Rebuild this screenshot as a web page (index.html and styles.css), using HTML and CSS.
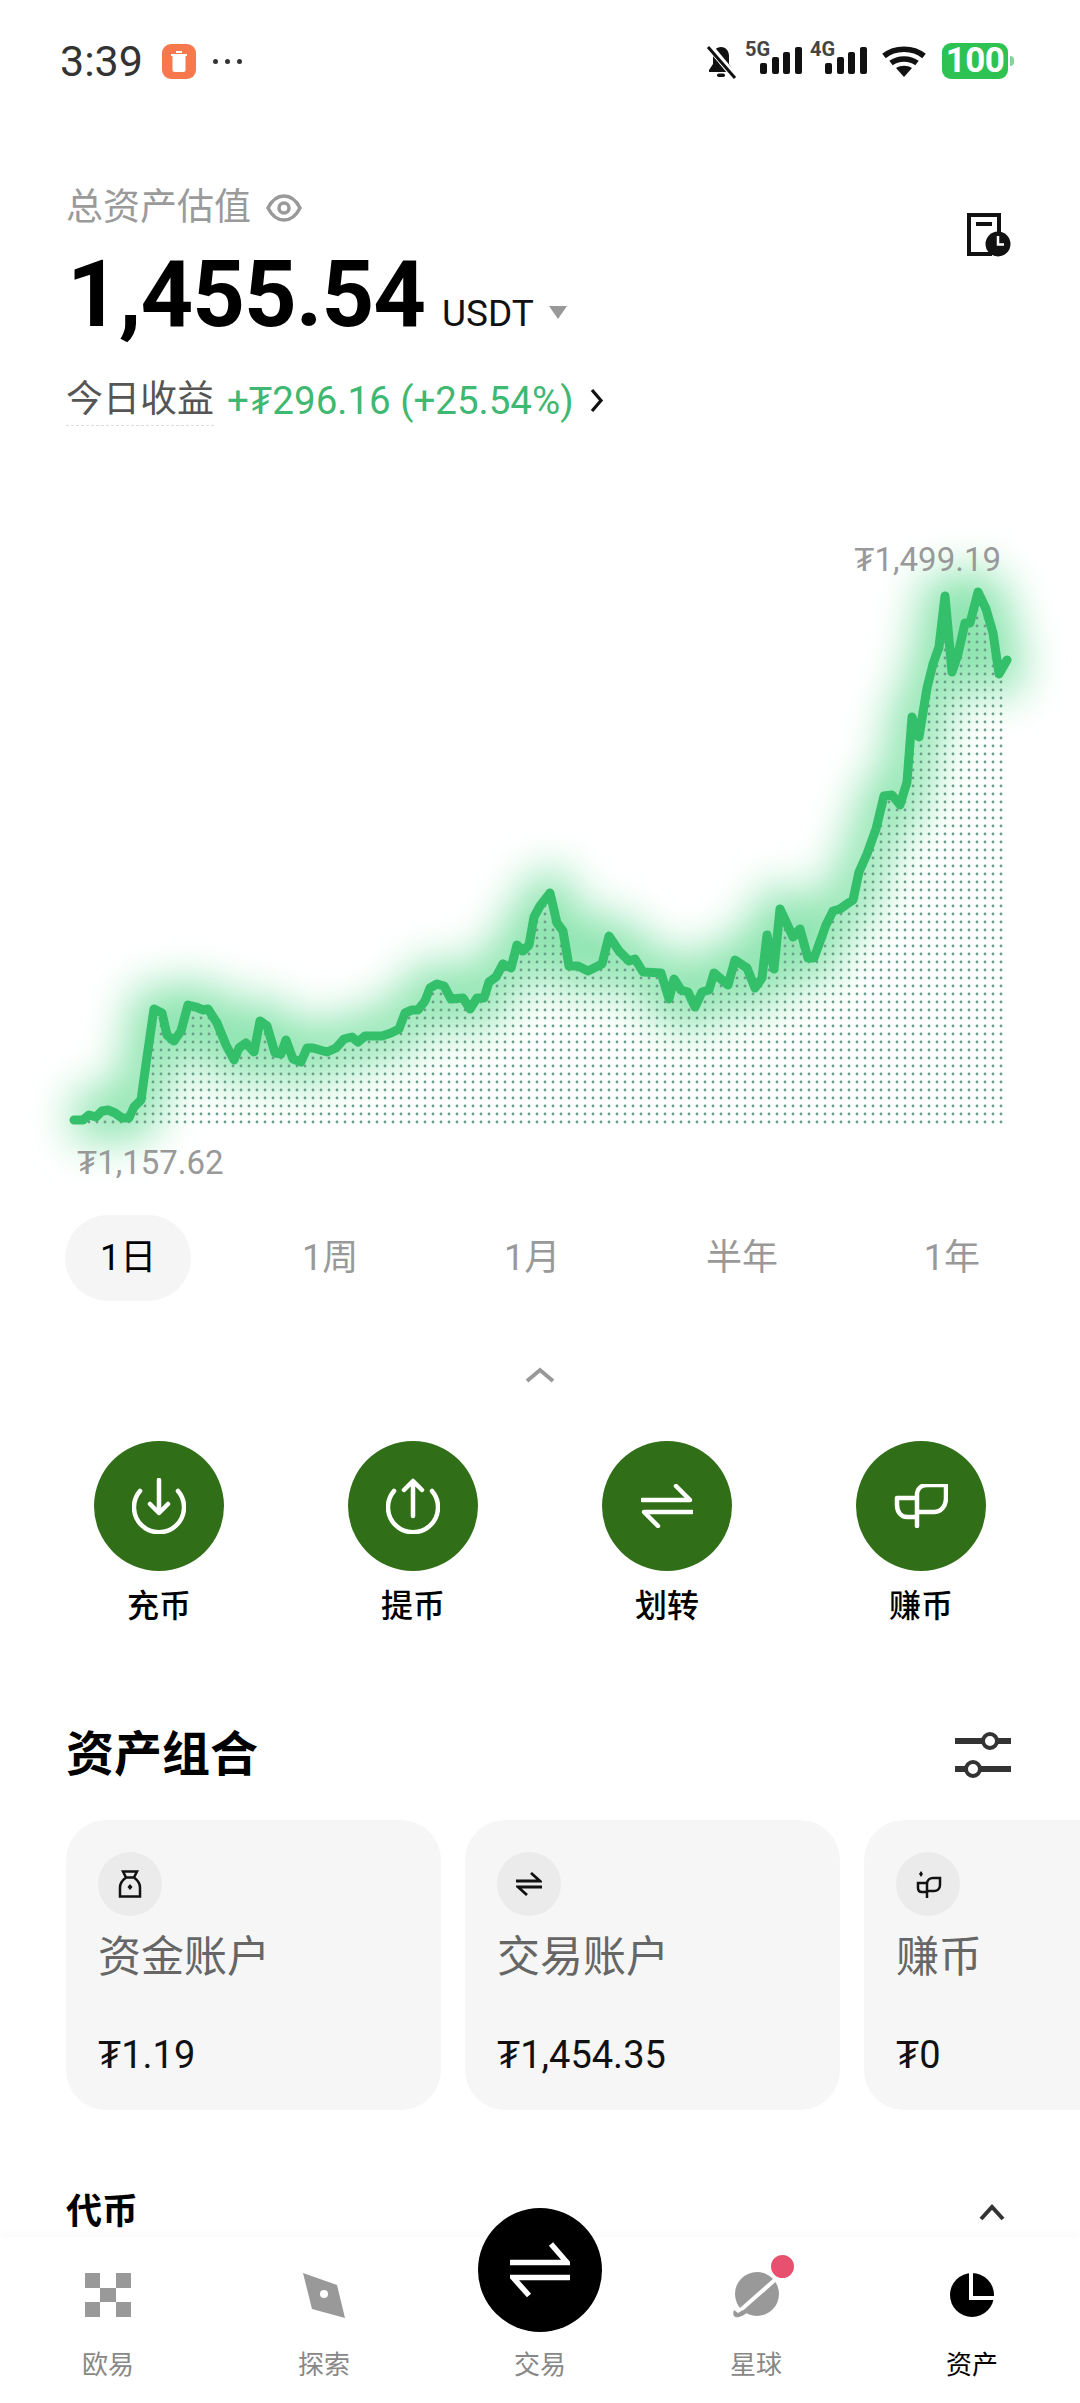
FILE: index.html
```html
<!DOCTYPE html>
<html lang="zh-CN">
<head>
<meta charset="UTF-8" />
<meta name="viewport" content="width=device-width, initial-scale=1" />
<title>资产</title>
<link rel="stylesheet" href="styles.css">
</head>
<body>
  <div class="page">
    <main class="content">
      <div class="status">
        <div class="status-left">
          <span class="time">3:39</span>
          <span class="app-badge">
            <svg width="18" height="22" viewBox="0 0 18 22"><path d="M6 1h6v2H6zM1 4h16v2H1zM2.500 6h13v14a2 2 0 0 1-2 2h-9a2 2 0 0 1-2-2z" fill="#fff"/></svg>
          </span>
          <span class="more-dots"><i></i><i></i><i></i></span>
        </div>
        <div class="status-right">
          <svg class="bell" width="31" height="35" viewBox="0 0 31 35"><path d="M15 3c-5 0-8 4-8 9v8l-4 6v2h24v-2l-4-6v-8c0-5-3-9-8-9z" fill="#111"/><rect x="11" y="29.500" width="8" height="3.500" rx="1.700" fill="#111"/><path d="M3 2l26 31" stroke="#fff" stroke-width="7"/><path d="M2 3l27 31" stroke="#111" stroke-width="3"/></svg>
          <div class="signal"><span class="net">5G</span><i class="b1"></i><i class="b2"></i><i class="b3"></i><i class="b4"></i></div>
          <div class="signal"><span class="net">4G</span><i class="b1"></i><i class="b2"></i><i class="b3"></i><i class="b4"></i></div>
          <svg class="wifi" width="46" height="31" viewBox="0 0 46 31"><path d="M3 10c11-9 29-9 40 0M10 17c7-5.500 19-5.500 26 0" fill="none" stroke="#111" stroke-width="5.500"/><path d="M15 22c5-3 11-3 16 0l-8 9z" fill="#111"/></svg>
          <div class="battery"><span class="battery-level">100</span></div>
          <span class="battery-tip"></span>
        </div>
      </div>

      <section class="summary">
        <div class="summary-main">
          <div class="total-label">总资产估值
            <svg width="36" height="28" viewBox="0 0 36 28"><path d="M2 14C6 6 12 2 18 2s12 4 16 12c-4 8-10 12-16 12S6 22 2 14z" fill="none" stroke="#999" stroke-width="3.500"/><circle cx="18" cy="14" r="5" fill="none" stroke="#999" stroke-width="3.500"/></svg>
          </div>
          <div class="total-row">
            <span class="total-value">1,455.54</span>
            <span class="total-unit">USDT</span>
            <span class="caret-down"></span>
          </div>
          <div class="pnl-row">
            <span class="pnl-label">今日收益</span>
            <span class="pnl-value">+₮296.16 (+25.54%)</span>
            <svg width="15" height="25" viewBox="0 0 15 25"><path d="M3 2l9 10.500L3 23" fill="none" stroke="#111" stroke-width="3.200"/></svg>
          </div>
        </div>
        <svg class="history-icon" width="44" height="44" viewBox="0 0 44 44"><path d="M25 41H2V2h30v20" fill="none" stroke="#111" stroke-width="4"/><rect x="9" y="9" width="16" height="4" fill="#111"/><circle cx="31" cy="31" r="12.500" fill="#111"/><path d="M31 23v8.500h6" fill="none" stroke="#fff" stroke-width="2.500"/></svg>
      </section>

      <div class="chart">
        <span class="chart-high">₮1,499.19</span>
        <span class="chart-low">₮1,157.62</span>
        <svg width="1080" height="670" viewBox="0 520 1080 670">
          <defs>
            <pattern id="dots" patternUnits="userSpaceOnUse" x="997" y="1117" width="8" height="8">
              <circle cx="4" cy="4" r="1.400" fill="#6a9f88"/>
            </pattern>
            <filter id="glow" x="-20%" y="-30%" width="140%" height="160%">
              <feGaussianBlur stdDeviation="22"/>
            </filter>
            <clipPath id="under-line">
              <polygon points="74,1119 83,1119 89,1114 96,1116 102,1110 108,1109 115,1112 122,1117 129,1117 134,1106 141,1099 146,1063 154,1008 162,1012 167,1034 174,1040 181,1030 188,1004 196,1006 203,1009 208,1008 217,1022 226,1044 234,1059 239,1047 246,1042 254,1051 260,1020 267,1025 275,1052 281,1053 286,1039 293,1058 301,1061 307,1047 313,1047 327,1051 336,1047 344,1038 352,1036 358,1041 365,1035 382,1035 391,1032 399,1028 405,1012 412,1009 418,1009 425,1000 430,987 437,983 444,985 451,998 463,997 470,1008 477,997 484,997 489,981 496,976 503,963 511,967 517,944 523,950 529,944 534,916 540,905 550,892 557,922 563,930 569,965 578,965 588,970 602,963 609,935 619,950 629,960 635,958 643,971 661,972 669,998 674,978 681,989 688,991 695,1006 702,991 709,989 714,972 728,984 735,959 747,967 755,987 762,977 767,934 774,968 780,908 793,936 800,928 808,957 814,957 826,924 833,910 840,908 847,903 853,899 859,871 867,853 876,828 884,795 892,794 900,804 907,781 912,716 919,736 927,687 933,663 939,646 945,595 952,671 958,653 965,622 970,622 978,591 986,608 993,632 999,673 1007,659 1007,1130 74,1130"/>
            </clipPath>
            <polyline id="price-line" points="74,1119 83,1119 89,1114 96,1116 102,1110 108,1109 115,1112 122,1117 129,1117 134,1106 141,1099 146,1063 154,1008 162,1012 167,1034 174,1040 181,1030 188,1004 196,1006 203,1009 208,1008 217,1022 226,1044 234,1059 239,1047 246,1042 254,1051 260,1020 267,1025 275,1052 281,1053 286,1039 293,1058 301,1061 307,1047 313,1047 327,1051 336,1047 344,1038 352,1036 358,1041 365,1035 382,1035 391,1032 399,1028 405,1012 412,1009 418,1009 425,1000 430,987 437,983 444,985 451,998 463,997 470,1008 477,997 484,997 489,981 496,976 503,963 511,967 517,944 523,950 529,944 534,916 540,905 550,892 557,922 563,930 569,965 578,965 588,970 602,963 609,935 619,950 629,960 635,958 643,971 661,972 669,998 674,978 681,989 688,991 695,1006 702,991 709,989 714,972 728,984 735,959 747,967 755,987 762,977 767,934 774,968 780,908 793,936 800,928 808,957 814,957 826,924 833,910 840,908 847,903 853,899 859,871 867,853 876,828 884,795 892,794 900,804 907,781 912,716 919,736 927,687 933,663 939,646 945,595 952,671 958,653 965,622 970,622 978,591 986,608 993,632 999,673 1007,659"/>
          </defs>
          <use href="#price-line" class="line-glow" filter="url(#glow)"/>
          <rect x="74" y="560" width="931" height="566" fill="url(#dots)" clip-path="url(#under-line)"/>
          <use href="#price-line" class="line-main"/>
        </svg>
      </div>

      <div class="ranges">
        <span class="range active">1日</span>
        <span class="range">1周</span>
        <span class="range">1月</span>
        <span class="range">半年</span>
        <span class="range">1年</span>
      </div>

      <div class="collapse">
        <svg width="30" height="16" viewBox="0 0 30 16"><path d="M2 14L15 3l13 11" fill="none" stroke="#999" stroke-width="4"/></svg>
      </div>

      <div class="actions">
        <div class="action">
          <span class="action-circle">
            <svg class="action-icon" width="54" height="56" viewBox="0 0 54 56"><path d="M8 13A25 25 0 1 0 46 13"/><path d="M27 2V34M18 26L27 35L36 26"/></svg>
          </span>
          充币
        </div>
        <div class="action">
          <span class="action-circle">
            <svg class="action-icon" width="54" height="56" viewBox="0 0 54 56"><path d="M8 13A25 25 0 1 0 46 13"/><path d="M27 38V4M18 12L27 3L36 12"/></svg>
          </span>
          提币
        </div>
        <div class="action">
          <span class="action-circle">
            <svg class="action-icon" width="52" height="44" viewBox="0 0 52 44"><path d="M1 16h48L35 2M51 28H3l14 14"/></svg>
          </span>
          划转
        </div>
        <div class="action">
          <span class="action-circle">
            <svg class="action-icon" width="54" height="44" viewBox="0 0 54 44"><path d="M23 42V11C23 5 27 1 33 1h19v13c0 8-5 14-12 14H23M23 14H3v7c0 7 4 12 10 12h10"/></svg>
          </span>
          赚币
        </div>
      </div>

      <div class="section-head">
        <h2>资产组合</h2>
        <svg width="56" height="47" viewBox="0 0 56 47"><path d="M0 9h56M0 37h56" stroke="#333" stroke-width="6"/><circle cx="35" cy="9" r="7" fill="#fff" stroke="#333" stroke-width="4"/><circle cx="18" cy="37" r="7" fill="#fff" stroke="#333" stroke-width="4"/></svg>
      </div>

      <div class="cards">
        <div class="card">
          <span class="card-icon">
            <svg width="24" height="28" viewBox="0 0 24 28"><path d="M5 1.500h14l-3 6c4 3 6 6 6 10v9H2v-9c0-4 2-7 6-10zM8 7.500h8" fill="none" stroke="#111" stroke-width="2.500"/><path d="M12 14l2.500 3-2.500 3-2.500-3z" fill="#111"/></svg>
          </span>
          <div class="card-title">资金账户</div>
          <div class="card-value">₮1.19</div>
        </div>
        <div class="card">
          <span class="card-icon">
            <svg width="26" height="24" viewBox="0 0 26 24"><path d="M0 9h24L15 1M26 15H2l9 8" fill="none" stroke="#111" stroke-width="2.800"/></svg>
          </span>
          <div class="card-title">交易账户</div>
          <div class="card-value">₮1,454.35</div>
        </div>
        <div class="card">
          <span class="card-icon">
            <svg width="28" height="28" viewBox="0 0 28 28"><path d="M13 28V14c0-4 3-6 6-6h7v7c0 4-3 6-6 6h-7M13 13H4v5c0 3 2 4 4 4h5" fill="none" stroke="#111" stroke-width="2.500"/><path d="M7 1l2 3-2 3-2-3z" fill="#111"/></svg>
          </span>
          <div class="card-title">赚币</div>
          <div class="card-value">₮0</div>
        </div>
      </div>

      <div class="token-head">
        <h3>代币</h3>
        <svg width="26" height="17" viewBox="0 0 26 17"><path d="M2 15L13 3l11 12" fill="none" stroke="#333" stroke-width="4"/></svg>
      </div>
    </main>

    <nav class="tabbar">
      <a class="tab">
        <svg width="46" height="46" viewBox="0 0 46 46"><path d="M0 1h15v15H0zM31 1h15v15H31zM15 16h16v14H15zM0 30h15v15H0zM31 30h15v15H31z" fill="#999"/></svg>
        欧易
      </a>
      <a class="tab">
        <svg width="46" height="46" viewBox="0 0 46 46"><path d="M2 1l34 12 8 33-33-9z" fill="#999"/><circle cx="23" cy="22" r="4" fill="#fff"/></svg>
        探索
      </a>
      <a class="tab trade">
        <span class="trade-circle">
          <svg width="60" height="56" viewBox="0 0 60 56"><path d="M0 20.500h57L41 2M60 35.500H3l16 18" fill="none" stroke="#fff" stroke-width="5.500"/></svg>
        </span>
        交易
      </a>
      <a class="tab">
        <span class="planet">
          <svg width="46" height="46" viewBox="0 0 46 46"><circle cx="24" cy="22" r="22" fill="#999"/><path d="M2 43L44 6" stroke="#fff" stroke-width="4"/><path d="M1 38c-2 5 0 8 5 7 3-1 5-2 8-4l-4-3-5 3z" fill="#999"/></svg>
          <span class="red-dot"></span>
        </span>
        星球
      </a>
      <a class="tab current">
        <svg width="46" height="46" viewBox="0 0 46 46"><circle cx="23" cy="23" r="22" fill="#000"/><path d="M22 0v26h24" fill="none" stroke="#fff" stroke-width="4"/></svg>
        资产
      </a>
    </nav>
  </div>
</body>
</html>
```

FILE: styles.css
```css
* {
  box-sizing: border-box;
}
body {
  margin: 0;
  font-family: Roboto, 'Noto Sans CJK SC', sans-serif;
  background: #fff;
  color: #000;
}
.page {
  width: 1080px;
  height: 2403px;
  overflow: hidden;
  display: flex;
  flex-direction: column;
  position: relative;
}
.content {
  flex: 1;
  overflow: hidden;
}

/* status bar */
.status {
  height: 122px;
  padding: 0 66px 0 60px;
  display: flex;
  justify-content: space-between;
  align-items: center;
}
.status-left {
  display: flex;
  align-items: center;
}
.time {
  font-size: 43px;
  color: #333;
  width: 102px;
}
.app-badge {
  width: 34px;
  height: 35px;
  background: #f8784e;
  border-radius: 9px;
  display: flex;
  align-items: center;
  justify-content: center;
}
.more-dots {
  display: flex;
  gap: 7px;
  margin-left: 17px;
}
.more-dots i {
  width: 5px;
  height: 5px;
  border-radius: 50%;
  background: #333;
}
.status-right {
  display: flex;
  align-items: center;
}
.bell {
  margin-right: 8px;
}
.signal {
  position: relative;
  width: 57px;
  height: 32px;
  margin-bottom: 6px;
  display: flex;
  align-items: flex-end;
  justify-content: flex-end;
  gap: 4.670px;
}
.signal + .signal {
  margin-left: 8px;
}
.net {
  position: absolute;
  left: 0;
  top: -3px;
  font-size: 20px;
  font-weight: 700;
  line-height: 20px;
  color: #444;
}
.signal i {
  width: 7px;
  background: #111;
  border-radius: 2px;
}
.signal .b1 { height: 11px; }
.signal .b2 { height: 17px; }
.signal .b3 { height: 22px; }
.signal .b4 { height: 27px; }
.wifi {
  margin-left: 14px;
  margin-right: 15px;
}
.battery {
  width: 66px;
  height: 36px;
  background: #2ec252;
  border-radius: 9px;
  display: flex;
  align-items: center;
  justify-content: center;
}
.battery-level {
  color: #fff;
  font-size: 35px;
  font-weight: 700;
  line-height: 36px;
  letter-spacing: -0.5px;
}
.battery-tip {
  width: 4px;
  height: 10px;
  margin-left: 2px;
  background: #7ed69a;
  border-radius: 0 4px 4px 0;
}

/* total */
.summary {
  padding: 61px 69px 0 66px;
  display: flex;
  justify-content: space-between;
  align-items: flex-start;
}
.total-label {
  font-size: 37px;
  line-height: 50px;
  color: #9a9a9a;
  display: flex;
  align-items: center;
  gap: 15px;
}
.total-row {
  display: flex;
  align-items: baseline;
  height: 100px;
  margin-top: 12px;
  line-height: 100px;
}
.total-value {
  font-size: 92px;
  font-weight: 700;
  letter-spacing: -1px;
  margin-left: 1px;
}
.total-unit {
  font-size: 37px;
  margin-left: 17px;
  color: #111;
}
.caret-down {
  width: 0;
  height: 0;
  margin-left: 15px;
  border-left: 9px solid transparent;
  border-right: 9px solid transparent;
  border-top: 13px solid #999;
  transform: translateY(-7px);
}
.pnl-row {
  display: flex;
  align-items: center;
  height: 50px;
  margin-top: 30px;
}
.pnl-label {
  font-size: 37px;
  color: #555;
  line-height: 50px;
  border-bottom: 1px dashed #ddd;
}
.pnl-value {
  font-size: 38.500px;
  color: #3fb871;
  margin: 0 15px 0 13px;
}
.history-icon {
  margin-top: 30px;
}

/* chart */
.chart {
  position: relative;
  margin-top: 96px;
  height: 670px;
}
.chart svg {
  display: block;
}
.chart-high,
.chart-low {
  position: absolute;
  font-size: 33px;
  line-height: 40px;
  color: #999;
  z-index: 1;
}
.chart-high {
  right: 79px;
  top: 19px;
}
.chart-low {
  left: 77px;
  top: 622px;
}
.line-glow {
  fill: none;
  stroke: #8be4ae;
  stroke-width: 46;
  stroke-linejoin: round;
}
.line-main {
  fill: none;
  stroke: #34bf6b;
  stroke-width: 9;
  stroke-linejoin: round;
  stroke-linecap: round;
}

/* range tabs */
.ranges {
  margin: 24px 65px 0;
  display: flex;
  justify-content: space-between;
}
.range {
  height: 86px;
  line-height: 86px;
  padding: 0 35px;
  border-radius: 43px;
  font-size: 36px;
  color: #999;
}
.range.active {
  background: #f5f5f5;
  color: #000;
}
.collapse {
  margin-top: 66px;
  height: 20px;
  display: flex;
  justify-content: center;
}

/* actions */
.actions {
  margin-top: 54px;
  padding: 0 32px;
  display: grid;
  grid-template-columns: repeat(4, 1fr);
}
.action {
  display: flex;
  flex-direction: column;
  align-items: center;
  gap: 12px;
  font-size: 32px;
  line-height: 46px;
  font-weight: 500;
}
.action-circle {
  width: 130px;
  height: 130px;
  border-radius: 50%;
  background: #306f18;
  display: flex;
  align-items: center;
  justify-content: center;
}
.action-icon path {
  fill: none;
  stroke: #fff;
  stroke-width: 4.500;
  stroke-linecap: round;
  stroke-linejoin: round;
}

/* portfolio */
.section-head {
  margin-top: 96px;
  padding: 0 69px 0 66px;
  display: flex;
  justify-content: space-between;
  align-items: center;
}
.section-head h2 {
  margin: 0;
  font-size: 48px;
  line-height: 60px;
  font-weight: 700;
}
.cards {
  margin-top: 35px;
  padding-left: 66px;
  display: flex;
  gap: 24px;
}
.card {
  flex: 0 0 375px;
  height: 290px;
  padding: 32px;
  background: #f6f6f6;
  border-radius: 40px;
}
.card-icon {
  width: 64px;
  height: 64px;
  border-radius: 50%;
  background: #ebebeb;
  display: flex;
  align-items: center;
  justify-content: center;
}
.card-title {
  margin-top: 13px;
  font-size: 43px;
  line-height: 56px;
  color: #666;
}
.card-value {
  margin-top: 45px;
  font-size: 38px;
  line-height: 50px;
  color: #111;
}
.token-head {
  margin-top: 78px;
  padding: 0 75px 0 66px;
  display: flex;
  justify-content: space-between;
  align-items: center;
}
.token-head h3 {
  margin: 0;
  font-size: 36px;
  line-height: 48px;
  font-weight: 700;
}

/* bottom nav */
.tabbar {
  height: 166px;
  background: #fff;
  box-shadow: 0 -2px 10px rgba(0, 0, 0, 0.03);
  display: grid;
  grid-template-columns: repeat(5, 216px);
  position: relative;
}
.tab {
  display: flex;
  flex-direction: column;
  align-items: center;
  padding-top: 35px;
  gap: 28px;
  font-size: 26px;
  line-height: 38px;
  color: #888;
}
.tab.current {
  color: #000;
}
.tab.trade {
  position: relative;
  padding-top: 109px;
}
.trade-circle {
  position: absolute;
  top: -29px;
  left: 46px;
  width: 124px;
  height: 124px;
  border-radius: 50%;
  background: #000;
  display: flex;
  align-items: center;
  justify-content: center;
}
.planet {
  position: relative;
  height: 46px;
}
.red-dot {
  position: absolute;
  top: -19px;
  left: 36px;
  width: 27px;
  height: 27px;
  border-radius: 50%;
  background: #e8506f;
  border: 2px solid #fff;
}
```
